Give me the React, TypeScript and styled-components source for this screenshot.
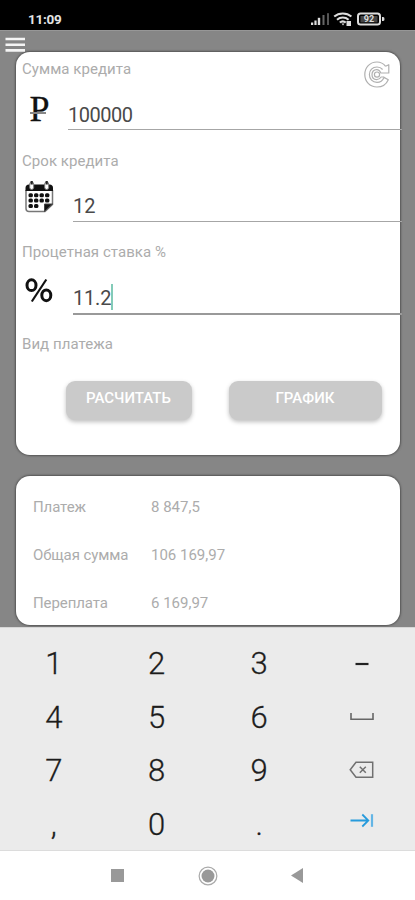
import React from "react";
import styled, { createGlobalStyle } from "styled-components";

const GlobalStyle = createGlobalStyle`
  * { box-sizing: border-box; }
  body { margin: 0; background: #fff; }
  svg { display: block; flex: none; }
`;

const Screen = styled.div`
  width: 415px;
  height: 900px;
  overflow: hidden;
  display: flex;
  flex-direction: column;
  font-family: Roboto, "Liberation Sans", sans-serif;
`;

const StatusBar = styled.header`
  height: 30px;
  flex: none;
  background: #000;
  color: #e4e4e4;
  display: flex;
  justify-content: space-between;
  padding: 8px 29px 0 28px;
`;

const Clock = styled.span`
  font: 700 13.5px/23px Roboto, sans-serif;
  letter-spacing: -0.25px;
`;

const Content = styled.main`
  height: 597px;
  flex: none;
  background: #868686;
  border-top: 1px solid #979797;
  padding: 0 15px 0 16px;
`;

const MenuButton = styled.div`
  height: 21px;
  margin-left: -11px;
  padding-top: 6px;
`;

const Card = styled.section<{ $height: number }>`
  height: ${(p) => p.$height}px;
  background: #fff;
  border-radius: 14px;
  box-shadow: 0 0 2px 1px #555;
`;

const FormCard = styled(Card)`
  display: flex;
  flex-direction: column;
  padding: 8px 0 0 6px;
`;

const Field = styled.div`
  height: 91.5px;
  display: flex;
  flex-direction: column;
`;

const LabelRow = styled.div`
  display: flex;
  justify-content: space-between;
  height: 19px;
  padding-right: 10px;
`;

const Label = styled.label`
  font-size: 15px;
  line-height: 19px;
  letter-spacing: 0.05px;
  color: #acacac;
  white-space: nowrap;
`;

const InputRow = styled.div`
  display: flex;
  height: 52px;
  margin-right: -2px;
`;

const IconBox = styled.div<{ $width: number; $top: number; $left?: number }>`
  width: ${(p) => p.$width}px;
  flex: none;
  padding: ${(p) => p.$top}px 0 0 ${(p) => p.$left ?? 0}px;
`;

const RubleSign = styled.span`
  display: block;
  position: relative;
  width: 20px;
  font: 400 36px/36px "Liberation Serif", serif;
  color: #111;
  -webkit-text-stroke: 0.3px #111;

  &::after {
    content: "";
    position: absolute;
    left: 0;
    top: 21px;
    width: 16px;
    height: 2px;
    background: #888;
  }
`;

const Value = styled.div<{ $focused?: boolean; $spacing?: number }>`
  flex: 1;
  height: ${(p) => (p.$focused ? 52.5 : 51)}px;
  border-bottom: ${(p) => (p.$focused ? "2.5px solid #999" : "1.5px solid #a6a6a6")};
  display: flex;
  padding-top: 21.5px;
  font-size: 20px;
  line-height: 28px;
  letter-spacing: ${(p) => p.$spacing ?? 0}px;
  color: #4a4a4a;
`;

const Caret = styled.span`
  width: 2px;
  height: 26px;
  background: #83cbb8;
`;

const Actions = styled.div`
  display: flex;
  gap: 37px;
  padding: 27.5px 0 0 43.5px;
`;

const Button = styled.button<{ $width: number }>`
  width: ${(p) => p.$width}px;
  height: 39px;
  border: 0;
  border-radius: 9px;
  padding: 0 0 5px;
  background: #cacaca;
  box-shadow: 0 2px 4px rgba(0, 0, 0, 0.25);
  color: #fff;
  font: 500 15px/18px Roboto, sans-serif;
`;

const ResultCard = styled(Card)`
  margin-top: 21px;
  padding: 7px 17px 0;
`;

const ResultRow = styled.div`
  display: grid;
  grid-template-columns: 118px 1fr;
  height: 48px;
  align-items: center;
  font-size: 15px;
  color: #acacac;
  white-space: nowrap;
`;

const ResultLabel = styled.span`
  letter-spacing: -0.1px;
`;

const ResultValue = styled.span`
  letter-spacing: 0;
`;

const Keyboard = styled.section`
  height: 224px;
  flex: none;
  background: #ebebeb;
  border-top: 1px solid #d6d6d6;
  border-bottom: 1px solid #dcdcdc;
  display: grid;
  grid-template-columns: repeat(4, 102.7px);
  grid-template-rows: repeat(4, 53.5px);
  padding: 9px 0 0 2.5px;
`;

const Key = styled.div`
  display: flex;
  align-items: center;
  justify-content: center;
  font-size: 31px;
  font-weight: 300;
  line-height: 53px;
  color: #1c1c1c;
  -webkit-text-stroke: 0.3px #1c1c1c;
`;

const NavBar = styled.nav`
  height: 49px;
  flex: none;
  background: #fff;
  display: flex;
  align-items: center;
  gap: 73.5px;
  padding-left: 111px;
`;

const SignalIcons = () => (
  <svg width="76" height="20" viewBox="0 0 76 20">
    <g fill="#ddd">
      <rect x="1" y="14.5" width="2.2" height="2.5" />
      <rect x="4.4" y="12.5" width="2.2" height="4.5" />
      <rect x="7.8" y="9.8" width="2.4" height="7.2" />
    </g>
    <rect x="12.5" y="7" width="2" height="10" fill="#666" />
    <rect x="17" y="5.2" width="2" height="11.8" fill="#555" />
    <g fill="none" stroke="#ddd" strokeWidth="2">
      <path d="M24.2 8.6c4.8-4.3 12.4-4.3 17.2 0M27 11.7c3.3-2.9 8.3-2.9 11.6 0M29.8 14.6c1.8-1.5 4.2-1.5 6 0" />
    </g>
    <path d="M31.5 15.5h3L33 17.5zM36.5 13h4.5v5h-4.5z" fill="#ddd" />
    <rect x="48" y="5.6" width="22" height="11" rx="2.6" fill="none" stroke="#ddd" strokeWidth="2" />
    <path d="M72 9h1.2q1.3 0 1.3 2t-1.3 2H72z" fill="#ddd" />
    <rect x="50.5" y="8" width="17" height="6.4" fill="#444" />
    <text x="59" y="14.4" textAnchor="middle" fontFamily="Roboto" fontWeight="700" fontSize="9" fill="#ddd">92</text>
  </svg>
);

const MenuIcon = () => (
  <svg width="21" height="15" viewBox="0 0 21 15">
    <path d="M.5 2h19.5M.5 7.7h19.5M.5 13.4h19.5" stroke="#f5f5f5" strokeWidth="2.6" />
  </svg>
);

const RefreshButton = styled.div`
  padding-top: 1px;
`;

const RefreshIcon = () => (
  <svg width="26" height="27" viewBox="0 0 26 27">
    <g fill="none" stroke="#b0b0b0" strokeWidth="1.2" strokeLinejoin="round">
      <path d="M21.6 5.3C19.5 2.6 16.6 1 13 1 5.8 1 .8 6.5.8 13.500S5.800 26 13 26c5.300 0 9.300-2.800 11.300-7.300l-4.300-2.300c-1.300 3-3.700 4.900-7 4.900-4.500 0-7.600-3.300-7.600-7.800S8.500 6 13 6c2.300 0 4.300.9 5.600 2.500" />
      <path d="M21.6 5.300 24.800 3.700V12h-8c-.8-2.300-2.200-3.400-4.200-3.400-2.900 0-4.600 2.100-4.600 5s1.800 5 4.600 5c2 0 3.500-.9 4.500-2.600h3" />
      <circle cx="13" cy="13.600" r="2.600" />
    </g>
  </svg>
);

const CalendarIcon = () => (
  <svg width="29" height="32" viewBox="0 0 29 32">
    <path d="M1 9v18.500q0 3 3 3H20l7.500-7V9" fill="#fff" stroke="#777" strokeWidth="1.500" />
    <path d="M.5 10V7q0-3.500 3.500-3.500h20.500q3.500 0 3.500 3.500v3z" fill="#111" />
    <g fill="#fff" stroke="#777">
      <rect x="4.700" y="1" width="4" height="7.500" rx="2" />
      <rect x="19.700" y="1" width="4" height="7.500" rx="2" />
    </g>
    <path d="M6.700 0v3.500M21.700 0v3.500" stroke="#222" strokeWidth="2.200" />
    <path d="M19.500 30.500v-7.500h8z" fill="#111" stroke="#444" />
    <g fill="#111">
      {[12.2, 17.6, 23].map((y, row) =>
        [3.5, 9, 14.5, 20].slice(0, row === 2 ? 2 : 4).map((x) => (
          <rect key={`${x}-${y}`} x={x} y={y} width="4.400" height="4" rx="1.500" />
        ))
      )}
    </g>
  </svg>
);

const PercentIcon = () => (
  <svg width="28" height="25" viewBox="0 0 28 25">
    <g fill="none" stroke="#111">
      <ellipse cx="6.500" cy="7.200" rx="4.500" ry="5.400" strokeWidth="3" />
      <ellipse cx="21.300" cy="17.300" rx="4.500" ry="5.400" strokeWidth="3" />
      <path d="M21.300 1.500 6.800 23.500" strokeWidth="2.200" />
    </g>
  </svg>
);

const SpaceIcon = () => (
  <svg width="24" height="8" viewBox="0 0 24 8">
    <path d="M1 0v6.300h22V0" fill="none" stroke="#666" strokeWidth="1.600" />
  </svg>
);

const BackspaceIcon = () => (
  <svg width="25" height="19" viewBox="0 0 25 19">
    <path d="M7 1.200h16.700v15H7L1.200 8.700zM10.800 5.800l6 6M16.800 5.800l-6 6" fill="none" stroke="#707070" strokeWidth="1.500" />
  </svg>
);

const NextIcon = () => (
  <svg width="24" height="22" viewBox="0 0 24 22">
    <path d="M.5 7.500h17.500M12.300 1.500l6 6-6 6" fill="none" stroke="#279bdc" strokeWidth="1.800" />
    <path d="M22 1.200v12.600" stroke="#63b5e5" strokeWidth="2.200" />
  </svg>
);

const MinusIcon = () => (
  <svg width="14" height="4" viewBox="0 0 14 4">
    <path d="M.5 2h13" stroke="#222" strokeWidth="2.200" />
  </svg>
);

const KEYS: { id: string; face: React.ReactNode }[] = [
  { id: "1", face: "1" },
  { id: "2", face: "2" },
  { id: "3", face: "3" },
  { id: "minus", face: <MinusIcon /> },
  { id: "4", face: "4" },
  { id: "5", face: "5" },
  { id: "6", face: "6" },
  { id: "space", face: <SpaceIcon /> },
  { id: "7", face: "7" },
  { id: "8", face: "8" },
  { id: "9", face: "9" },
  { id: "backspace", face: <BackspaceIcon /> },
  { id: "comma", face: "," },
  { id: "0", face: "0" },
  { id: "dot", face: "." },
  { id: "next", face: <NextIcon /> },
];

const RESULTS = [
  { label: "Платеж", value: "8 847,5" },
  { label: "Общая сумма", value: "106 169,97" },
  { label: "Переплата", value: "6 169,97" },
];

export default function App() {
  return (
    <Screen>
      <GlobalStyle />
      <StatusBar>
        <Clock>11:09</Clock>
        <SignalIcons />
      </StatusBar>
      <Content>
        <MenuButton>
          <MenuIcon />
        </MenuButton>
        <FormCard $height={403}>
          <Field>
            <LabelRow>
              <Label>Сумма кредита</Label>
              <RefreshButton>
                <RefreshIcon />
              </RefreshButton>
            </LabelRow>
            <InputRow>
              <IconBox $width={46} $top={12} $left={7.5}>
                <RubleSign>P</RubleSign>
              </IconBox>
              <Value $spacing={-0.5}>100000</Value>
            </InputRow>
          </Field>
          <Field>
            <LabelRow>
              <Label>Срок кредита</Label>
            </LabelRow>
            <InputRow>
              <IconBox $width={51} $top={10.5} $left={3}>
                <CalendarIcon />
              </IconBox>
              <Value>12</Value>
            </InputRow>
          </Field>
          <Field>
            <LabelRow>
              <Label>Процетная ставка %</Label>
            </LabelRow>
            <InputRow>
              <IconBox $width={51} $top={16} $left={3}>
                <PercentIcon />
              </IconBox>
              <Value $focused $spacing={-0.2}>
                11.2
                <Caret />
              </Value>
            </InputRow>
          </Field>
          <LabelRow>
            <Label>Вид платежа</Label>
          </LabelRow>
          <Actions>
            <Button $width={126}>РАСЧИТАТЬ</Button>
            <Button $width={153}>ГРАФИК</Button>
          </Actions>
        </FormCard>
        <ResultCard $height={149}>
          {RESULTS.map((r) => (
            <ResultRow key={r.label}>
              <ResultLabel>{r.label}</ResultLabel>
              <ResultValue>{r.value}</ResultValue>
            </ResultRow>
          ))}
        </ResultCard>
      </Content>
      <Keyboard>
        {KEYS.map((k) => (
          <Key key={k.id}>{k.face}</Key>
        ))}
      </Keyboard>
      <NavBar>
        <svg width="13" height="13" viewBox="0 0 13 13">
          <rect width="13" height="13" fill="#999" />
        </svg>
        <svg width="20" height="20" viewBox="0 0 21 21">
          <circle cx="10.500" cy="10.500" r="9.300" fill="none" stroke="#aaa" strokeWidth="1.300" />
          <circle cx="10.500" cy="10.500" r="6.800" fill="#999" />
        </svg>
        <svg width="12" height="15" viewBox="0 0 12 15">
          <path d="M12 0v15L0 7.500z" fill="#999" />
        </svg>
      </NavBar>
    </Screen>
  );
}
